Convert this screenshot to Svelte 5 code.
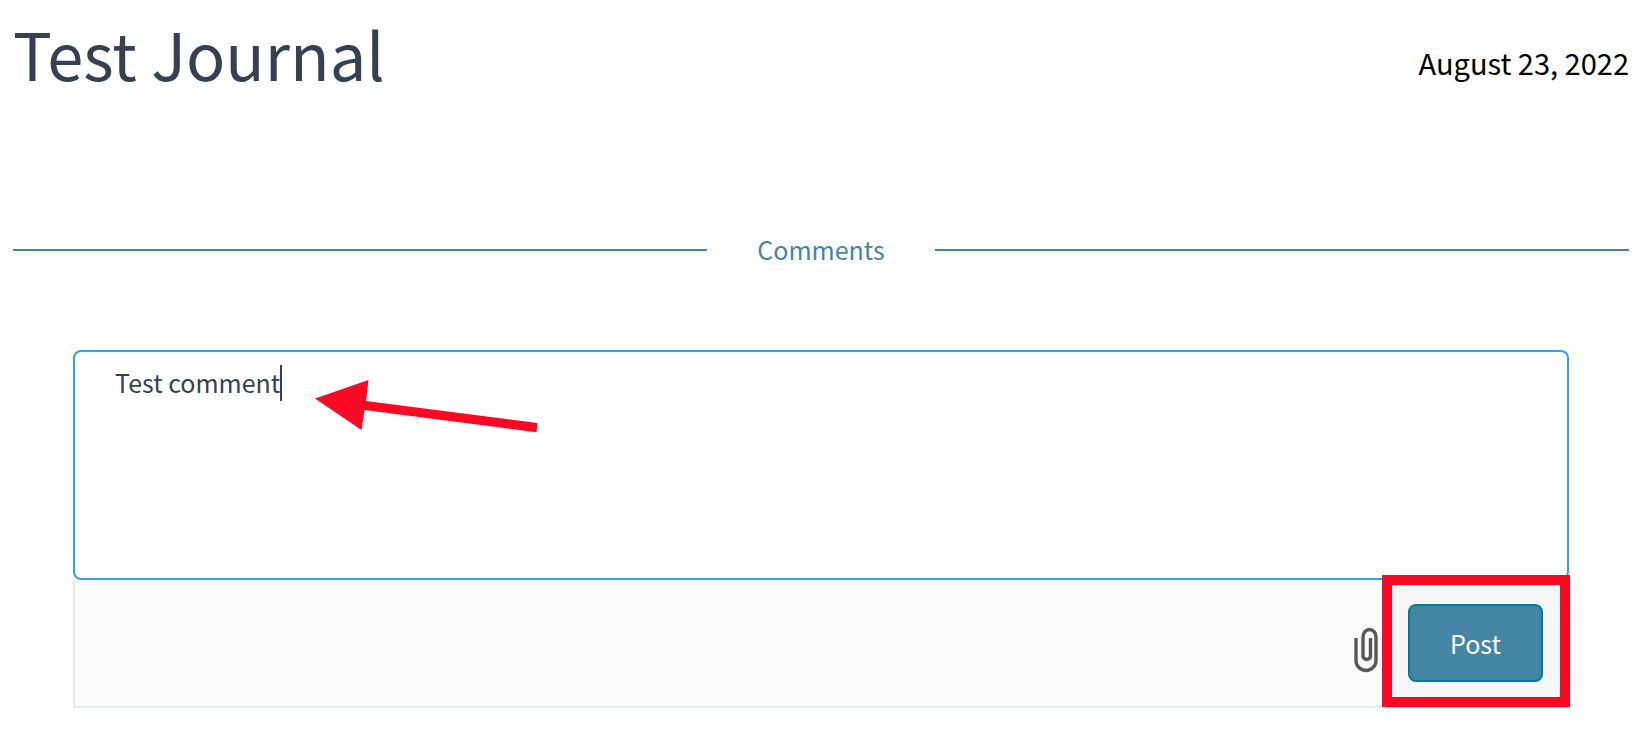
<script>
  let comment = $state('Test comment');
</script>

<main class="page">
  <header class="heading">
    <h1>Test Journal</h1>
    <time datetime="2022-08-23">August 23, 2022</time>
  </header>

  <h2 class="divider"><span>Comments</span></h2>

  <form class="composer" onsubmit={(e) => e.preventDefault()}>
    <textarea aria-label="Comment" bind:value={comment}></textarea>
    <span class="caret"></span>
    <svg class="arrow" width="226" height="54" viewBox="0 0 226 54" aria-hidden="true">
      <path d="M0 20.500 L53.5 2 L51 23 L222.500 45 L221.500 54.200 L49.500 32 L46.500 52 Z" fill="#fa0a22" />
    </svg>
    <div class="actions">
      <button class="attach" type="button" aria-label="Attach a file">
        <svg width="24" height="46" viewBox="0 0 24 46" aria-hidden="true">
          <path
            d="M2 11V33.500A10 10 0 0 0 22 33.500V10A6.500 7.500 0 0 0 9 10V29.500A4 4.500 0 0 0 16.500 29.500V11"
            fill="none" stroke="#56585a" stroke-width="3.400" />
        </svg>
      </button>
      <div class="post-wrap">
        <span class="marker"></span>
        <button class="post" type="submit">Post</button>
      </div>
    </div>
  </form>
</main>

<style>
  :global(body) {
    margin: 0;
    background: #fff;
  }
  .page {
    padding: 13px 15px 24px 13px;
    font-family: "Noto Sans CJK SC", "Noto Sans", sans-serif;
    color: #354052;
  }
  .heading {
    display: flex;
    justify-content: space-between;
    align-items: center;
    height: 80px;
  }
  h1 {
    margin: 0;
    font-size: 65px;
    line-height: 80px;
    font-weight: 400;
  }
  time {
    padding-top: 18px;
    font-size: 29px;
    line-height: 40px;
    color: #000;
  }
  .divider {
    display: flex;
    align-items: center;
    gap: 50px;
    margin: 137px 0 80px;
    font-size: 25px;
    line-height: 38px;
    font-weight: 400;
    color: #4485a3;
  }
  .divider span {
    padding-bottom: 2px;
  }
  .divider::before,
  .divider::after {
    content: "";
    flex: 1;
    height: 2px;
    background: #4485a3;
  }
  .composer {
    position: relative;
    margin: 0 60px;
  }
  textarea {
    display: block;
    box-sizing: border-box;
    width: 100%;
    height: 230px;
    padding: 11px 40px;
    border: 2px solid #309ff4;
    border-radius: 8px;
    outline: none;
    resize: none;
    background: #fff;
    color: #354052;
    font-family: inherit;
    font-size: 25px;
    line-height: 38px;
  }
  .caret {
    position: absolute;
    left: 207px;
    top: 15px;
    width: 2px;
    height: 36px;
    background: #354052;
  }
  .arrow {
    position: absolute;
    left: 242px;
    top: 28px;
    overflow: visible;
  }
  .actions {
    display: flex;
    justify-content: flex-end;
    gap: 30px;
    padding: 24px;
    border: 2px solid #e6eaee;
    border-top: 0;
    background: #fafbfd;
  }
  .attach {
    align-self: flex-end;
    position: relative;
    margin-bottom: 9px;
    padding: 0;
    border: 0;
    background: none;
  }
  .attach svg {
    display: block;
  }
  .post-wrap {
    position: relative;
  }
  .marker {
    position: absolute;
    inset: -29px -27px -25px -26px;
    border: 10px solid #fa0a22;
    background: #f4f6f8;
  }
  .post {
    position: relative;
    display: block;
    box-sizing: border-box;
    min-width: 135px;
    height: 78px;
    padding: 0 40px;
    border: 2px solid #007a9f;
    border-radius: 8px;
    background: #4485a3;
    color: #fff;
    font-family: inherit;
    font-size: 25px;
    line-height: 38px;
  }
</style>
